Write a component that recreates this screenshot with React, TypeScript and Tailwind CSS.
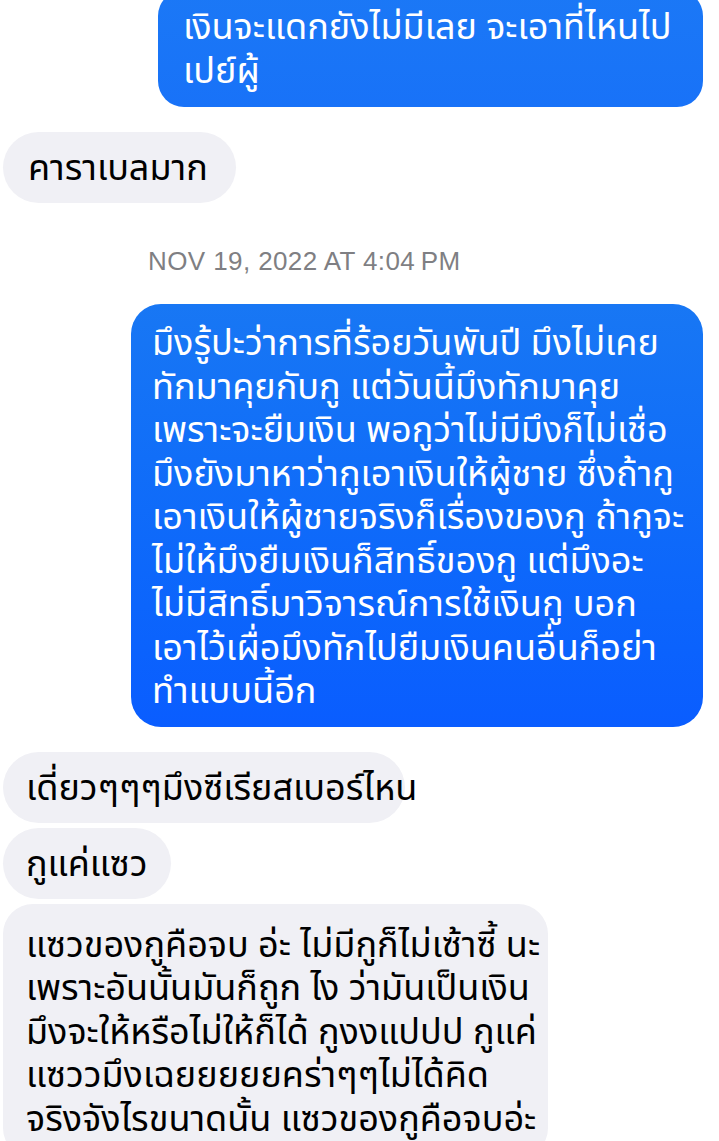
import React from "react";

const thai = {
  fontFamily:
    '"Noto Sans Thai", "Noto Sans", "DejaVu Sans", "Liberation Sans", sans-serif',
};

function Lines({ lines }: { lines: string[] }) {
  return (
    <>
      {lines.map((l, i) => (
        <div key={i} className="whitespace-nowrap">
          {l}
        </div>
      ))}
    </>
  );
}

export default function App() {
  return (
    <div
      className="w-[719px] h-[1141px] overflow-hidden bg-white text-[36px] leading-[43.5px]"
      style={thai}
    >
      <div className="flex flex-col -mt-[10px]">
        {/* outgoing 1 */}
        <div className="self-end mr-[16px] w-[545px] rounded-[26px] bg-gradient-to-b from-[#1b78f6] to-[#1872f8] text-white pl-[25px] pt-[17px] pb-[13px]">
          <Lines lines={["เงินจะแดกยังไม่มีเลย จะเอาที่ไหนไป", "เปย์ผู้"]} />
        </div>

        {/* incoming 1 */}
        <div className="self-start ml-[3px] mt-[25px] w-[233px] h-[71px] rounded-[36px] bg-[#f0f0f5] text-black pl-[25px] pt-[16px]">
          <Lines lines={["คาราเบลมาก"]} />
        </div>

        {/* timestamp */}
        <div
          className="pl-[148px] mt-[43px] text-[26px] leading-[30px] text-[#7f7f83] tracking-[0.4px]"
          style={{ fontFamily: '"Liberation Sans", Arial, sans-serif' }}
        >
          NOV 19, 2022 AT 4:04&#8239;PM
        </div>

        {/* outgoing big */}
        <div className="self-end mr-[16px] mt-[28px] w-[572px] rounded-[30px] bg-gradient-to-b from-[#1877f4] to-[#0a5dff] text-white pl-[21px] pt-[19px] pb-[12px]">
          <Lines
            lines={[
              "มึงรู้ปะว่าการที่ร้อยวันพันปี มึงไม่เคย",
              "ทักมาคุยกับกู แต่วันนี้มึงทักมาคุย",
              "เพราะจะยืมเงิน พอกูว่าไม่มีมึงก็ไม่เชื่อ",
              "มึงยังมาหาว่ากูเอาเงินให้ผู้ชาย ซึ่งถ้ากู",
              "เอาเงินให้ผู้ชายจริงก็เรื่องของกู ถ้ากูจะ",
              "ไม่ให้มึงยืมเงินก็สิทธิ์ของกู แต่มึงอะ",
              "ไม่มีสิทธิ์มาวิจารณ์การใช้เงินกู บอก",
              "เอาไว้เผื่อมึงทักไปยืมเงินคนอื่นก็อย่า",
              "ทำแบบนี้อีก",
            ]}
          />
        </div>

        {/* incoming group */}
        <div className="flex flex-col gap-[5px] mt-[25px] ml-[3px]">
          <div className="self-start w-[402px] h-[71px] rounded-[36px] bg-[#f0f0f5] text-black pl-[23px] pt-[16px]">
            <Lines lines={["เดี่ยวๆๆๆมึงซีเรียสเบอร์ไหน"]} />
          </div>
          <div className="self-start w-[168px] h-[71px] rounded-[36px] bg-[#f0f0f5] text-black pl-[23px] pt-[16px]">
            <Lines lines={["กูแค่แซว"]} />
          </div>
          <div className="self-start w-[545px] rounded-[30px] bg-[#f0f0f5] text-black pl-[23px] pt-[21px] pb-[16px]">
            <Lines
              lines={[
                "แซวของกูคือจบ อ่ะ ไม่มีกูก็ไม่เซ้าซี้ นะ",
                "เพราะอันนั้นมันก็ถูก ไง ว่ามันเป็นเงิน",
                "มึงจะให้หรือไม่ให้ก็ได้ กูงงแปปป กูแค่",
                "แซววมึงเฉยยยยยคร่าๆๆไม่ได้คิด",
                "จริงจังไรขนาดนั้น แซวของกูคือจบอ่ะ",
              ]}
            />
          </div>
        </div>
      </div>
    </div>
  );
}
